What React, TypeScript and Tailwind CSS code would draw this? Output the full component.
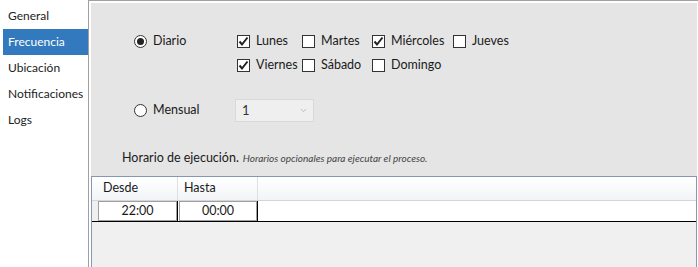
import { ChevronDown } from 'lucide-react';

const font = { fontFamily: '"Segoe UI", Lato, "Liberation Sans", sans-serif' };

function Check({ checked, label }: { checked?: boolean; label: string }) {
  return (
    <div className="flex items-center h-[23px]">
      <div className="w-[13px] h-[13px] border border-[#333333] bg-white flex items-center justify-center">
        {checked && (
          <svg width="11" height="11" viewBox="0 0 11 11">
            <path d="M1.5 5.5 L4 8.5 L9.5 1.5" fill="none" stroke="#222" strokeWidth="2" />
          </svg>
        )}
      </div>
      <span className="ml-[6px] text-[12.5px] text-[#1a1a1a]">{label}</span>
    </div>
  );
}

function Radio({ checked, label }: { checked?: boolean; label: string }) {
  return (
    <div className="flex items-center h-[23px]">
      <div className="w-[13px] h-[13px] rounded-full border border-[#333333] bg-white flex items-center justify-center">
        {checked && <div className="w-[7px] h-[7px] rounded-full bg-[#222]" />}
      </div>
      <span className="ml-[6px] text-[12.5px] text-[#1a1a1a]">{label}</span>
    </div>
  );
}

export default function App() {
  const menu = ['General', 'Frecuencia', 'Ubicación', 'Notificaciones', 'Logs'];

  return (
    <div className="w-[698px] h-[267px] flex bg-white overflow-hidden" style={font}>
      {/* Sidebar */}
      <div className="w-[88px] pt-[3px] flex flex-col">
        {menu.map((m) => (
          <div
            key={m}
            className={
              m === 'Frecuencia'
                ? 'ml-[3px] h-[26px] pl-[5px] flex items-center bg-[#3379bd] text-white text-[12px]'
                : 'ml-[3px] h-[26px] pl-[5px] flex items-center text-[#222] text-[12px]'
            }
          >
            {m}
          </div>
        ))}
      </div>

      {/* Panel */}
      <div className="flex-1 border-l border-t border-[#a0a0a0] bg-white pl-[2px] pt-[2px] pr-[1px] flex">
        <div className="flex-1 bg-[#e5e5e5] flex flex-col">
          <div className="h-[173px] flex flex-col pl-[43px] pt-[27px]">
            {/* Diario */}
            <div className="flex">
              <div className="w-[103px]">
                <Radio checked label="Diario" />
              </div>
              <div className="grid grid-cols-[65px_70px_81px_auto] gap-y-[1px]">
                <Check checked label="Lunes" />
                <Check label="Martes" />
                <Check checked label="Miércoles" />
                <Check label="Jueves" />
                <Check checked label="Viernes" />
                <Check label="Sábado" />
                <Check label="Domingo" />
              </div>
            </div>

            {/* Mensual */}
            <div className="flex items-center mt-[22px]">
              <div className="w-[101px]">
                <Radio label="Mensual" />
              </div>
              <div className="w-[79px] h-[23px] border border-[#d9d9d9] bg-[#efefef] flex items-center justify-between pl-[6px] pr-[5px]">
                <span className="text-[13px] text-[#333]">1</span>
                <ChevronDown className="w-[9px] h-[9px] text-[#aaa]" strokeWidth={2} />
              </div>
            </div>

            {/* Horario */}
            <div className="mt-[27px] ml-[-12px] flex items-baseline">
              <span className="text-[12.5px] text-[#1a1a1a]">Horario de ejecución.</span>
              <span className="ml-[4px] text-[10px] italic text-[#444]">
                Horarios opcionales para ejecutar el proceso.
              </span>
            </div>
          </div>

          {/* Table */}
          <div className="flex-1 border-t border-l border-r border-[#8497b4] bg-[#f0f0f0] flex flex-col">
            <div className="h-[24px] flex bg-gradient-to-b from-white to-[#f2f4f7] border-b border-[#d5d5d5]">
              <div className="w-[86px] border-r border-[#e0e0e0] pl-[11px] flex items-center text-[12.5px] text-[#1a1a1a]">
                Desde
              </div>
              <div className="w-[80px] border-r border-[#e0e0e0] pl-[6px] flex items-center text-[12.5px] text-[#1a1a1a]">
                Hasta
              </div>
              <div className="flex-1" />
            </div>
            <div className="h-[21px] flex bg-white border-b border-black">
              <div className="w-[6px] bg-[#f0f0f0]" />
              <div className="w-[80px] border-r border-black flex">
                <div className="flex-1 border border-[#a0a0a0] flex items-center justify-center text-[12.5px] text-[#1a1a1a]">
                  22:00
                </div>
              </div>
              <div className="w-[80px] border-r border-black pl-[1px] flex">
                <div className="flex-1 border border-[#a0a0a0] flex items-center justify-center text-[12.5px] text-[#1a1a1a]">
                  00:00
                </div>
              </div>
              <div className="flex-1" />
            </div>
          </div>
        </div>
      </div>
    </div>
  );
}
